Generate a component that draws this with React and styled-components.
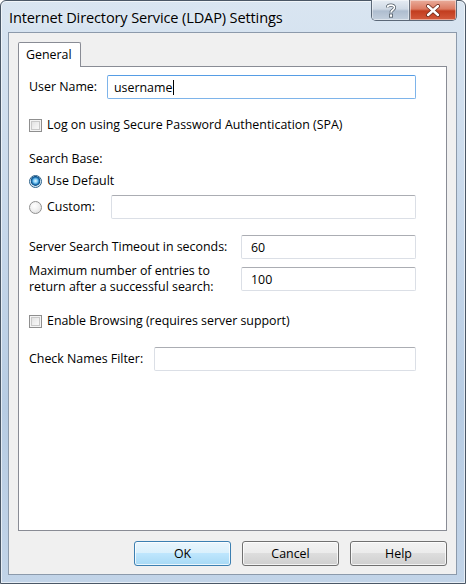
import React from 'react';
import styled, { createGlobalStyle } from 'styled-components';

const GlobalStyle = createGlobalStyle`
    html, body {
        margin: 0;
        padding: 0;
        background: #ffffff;
    }
    * {
        box-sizing: border-box;
    }
`;

const font = `"Open Sans", "Noto Sans", "Liberation Sans", sans-serif`;

const Window = styled.div`
    width: 466px;
    height: 584px;
    display: flex;
    flex-direction: column;
    border: 1px solid #4a5766;
    border-radius: 6px 6px 0 0;
    background: linear-gradient(180deg, #d9e5f1 0%, #c6d7ea 40%, #b7cce3 70%, #c2d4e8 100%);
    padding: 0 8px 8px 7px;
    font-family: ${font};
    font-size: 12.4px;
    color: #000;
    box-shadow: inset 0 0 0 1px rgba(255, 255, 255, 0.6);
`;

const TitleBar = styled.div`
    height: 31px;
    flex: none;
    display: flex;
    align-items: flex-start;
`;

const Title = styled.div`
    margin-top: 6px;
    margin-left: 1px;
    font-size: 14.6px;
    letter-spacing: -0.15px;
    color: #000;
    text-shadow: 0 0 8px rgba(255, 255, 255, 0.9);
`;

const Caption = styled.div`
    margin-left: auto;
    margin-top: -1px;
    display: flex;
    border: 1px solid #5b6878;
    border-top: none;
    border-radius: 0 0 5px 5px;
    overflow: hidden;
    height: 21px;
`;

const CaptionButton = styled.div`
    width: ${p => p.$w}px;
    display: flex;
    align-items: center;
    justify-content: center;
    background: ${p => p.$close
        ? 'linear-gradient(180deg, #e9ad9c 0%, #dc7b62 45%, #c23d1f 55%, #d45a3c 100%)'
        : 'linear-gradient(180deg, #e6ecf3 0%, #cfd9e5 45%, #aebdcf 55%, #c3cfdd 100%)'};
    border-left: ${p => p.$close ? '1px solid #6b7480' : 'none'};
    box-shadow: inset 0 0 0 1px rgba(255, 255, 255, 0.45);
`;

const Client = styled.div`
    flex: 1;
    display: flex;
    flex-direction: column;
    background: #f0f0f0;
    border: 1px solid #8c9aab;
    padding: 9px 9px 8px 9px;
`;

const TabStrip = styled.div`
    display: flex;
    height: 24px;
    position: relative;
    z-index: 1;
`;

const Tab = styled.div`
    width: 63px;
    height: 25px;
    background: #ffffff;
    border: 1px solid #898c95;
    border-bottom: none;
    border-radius: 2px 2px 0 0;
    padding: 3px 0 0 7px;
`;

const Panel = styled.div`
    height: 465px;
    background: #ffffff;
    border: 1px solid #898c95;
    padding: 8px 30px 0 10px;
    display: flex;
    flex-direction: column;
`;

const Row = styled.div`
    display: flex;
    align-items: center;
    margin-top: ${p => p.$mt || 0}px;
`;

const Label = styled.div`
    width: ${p => p.$w ? `${p.$w}px` : 'auto'};
    flex: none;
    line-height: 16px;
    white-space: nowrap;
`;

const Field = styled.div`
    flex: 1;
    height: 24px;
    border: 1px solid ${p => p.$focus ? '#7eb4ea' : '#dbdfe6'};
    border-top-color: ${p => p.$focus ? '#569de5' : '#abadb3'};
    border-radius: 2px;
    background: #fff;
    display: flex;
    align-items: center;
    padding-left: ${p => p.$pad || 6}px;
`;

const Caret = styled.span`
    display: inline-block;
    width: 1px;
    height: 15px;
    background: #000;
    margin-left: 1px;
`;

const Box = styled.div`
    width: 13px;
    height: 13px;
    flex: none;
    border: 1px solid #8f8f8f;
    background: linear-gradient(135deg, #dcdcdc 0%, #f2f2f2 60%, #fbfbfb 100%);
    box-shadow: inset 0 0 0 1px #f4f4f4, inset 0 0 0 2px #c9c9c9;
    margin-right: 5px;
`;

const Radio = styled.div`
    width: 13px;
    height: 13px;
    flex: none;
    border-radius: 50%;
    border: 1px solid ${p => p.$on ? '#2c628b' : '#8f8f8f'};
    background: ${p => p.$on
        ? 'radial-gradient(circle at 50% 45%, #e8f6ff 0%, #7ccbf5 25%, #1a6fb0 45%, #0e4d82 55%, #cfe4f3 62%, #f4f4f4 100%)'
        : 'radial-gradient(circle at 40% 35%, #ffffff 0%, #f1f1f1 45%, #d8d8d8 100%)'};
    margin-right: 5px;
`;

const Spacer = styled.div`
    flex: 1;
`;

const ButtonRow = styled.div`
    display: flex;
    justify-content: flex-end;
    gap: 11px;
    margin-top: 10px;
`;

const Button = styled.div`
    width: 97px;
    height: 25px;
    border: 1px solid ${p => p.$default ? '#3c7fb1' : '#707070'};
    border-radius: 3px;
    display: flex;
    align-items: center;
    justify-content: center;
    background: ${p => p.$default
        ? 'linear-gradient(180deg, #eaf6fd 0%, #d9f0fc 50%, #bee6fd 50%, #a7d9f5 100%)'
        : 'linear-gradient(180deg, #f2f2f2 0%, #ebebeb 50%, #dddddd 50%, #cfcfcf 100%)'};
    box-shadow: inset 0 0 0 1px rgba(255, 255, 255, 0.75);
`;

const App = () => {
    return (
        <>
            <GlobalStyle />
            <Window>
                <TitleBar>
                    <Title>Internet Directory Service (LDAP) Settings</Title>
                    <Caption>
                        <CaptionButton $w={37}>
                            <svg width="12" height="15" viewBox="0 0 12 15">
                                <path d="M2.5 4.5 C2.5 1.5 9.5 1.2 9.5 4.6 C9.5 7 6 7 6 9.5" fill="none" stroke="#4f5a66" strokeWidth="3.2" />
                                <path d="M2.5 4.5 C2.5 1.5 9.5 1.2 9.5 4.6 C9.5 7 6 7 6 9.5" fill="none" stroke="#fff" strokeWidth="1.6" />
                                <rect x="4.4" y="11" width="3.2" height="3.2" fill="#fff" stroke="#4f5a66" strokeWidth="0.8" />
                            </svg>
                        </CaptionButton>
                        <CaptionButton $w={47} $close>
                            <svg width="16" height="13" viewBox="0 0 16 13">
                                <path d="M3 2 L13 11 M13 2 L3 11" stroke="#6b2a1c" strokeWidth="4" strokeLinecap="round" />
                                <path d="M3 2 L13 11 M13 2 L3 11" stroke="#fff" strokeWidth="2.4" strokeLinecap="round" />
                            </svg>
                        </CaptionButton>
                    </Caption>
                </TitleBar>
                <Client>
                    <TabStrip>
                        <Tab>General</Tab>
                    </TabStrip>
                    <Panel>
                        <Row>
                            <Label $w={78}>User Name:</Label>
                            <Field $focus>username<Caret /></Field>
                        </Row>
                        <Row $mt={18}>
                            <Box />
                            <Label>Log on using Secure Password Authentication (SPA)</Label>
                        </Row>
                        <Row $mt={18}>
                            <Label>Search Base:</Label>
                        </Row>
                        <Row $mt={6}>
                            <Radio $on />
                            <Label>Use Default</Label>
                        </Row>
                        <Row $mt={6}>
                            <Radio />
                            <Label $w={64}>Custom:</Label>
                            <Field />
                        </Row>
                        <Row $mt={16}>
                            <Label $w={212}>Server Search Timeout in seconds:</Label>
                            <Field $pad={9}>60</Field>
                        </Row>
                        <Row $mt={4}>
                            <Label $w={212}>Maximum number of entries to<br />return after a successful search:</Label>
                            <Field $pad={9}>100</Field>
                        </Row>
                        <Row $mt={18}>
                            <Box />
                            <Label>Enable Browsing (requires server support)</Label>
                        </Row>
                        <Row $mt={18}>
                            <Label $w={125}>Check Names Filter:</Label>
                            <Field />
                        </Row>
                        <Spacer />
                    </Panel>
                    <ButtonRow>
                        <Button $default>OK</Button>
                        <Button>Cancel</Button>
                        <Button>Help</Button>
                    </ButtonRow>
                </Client>
            </Window>
        </>
    );
};

export default App;
